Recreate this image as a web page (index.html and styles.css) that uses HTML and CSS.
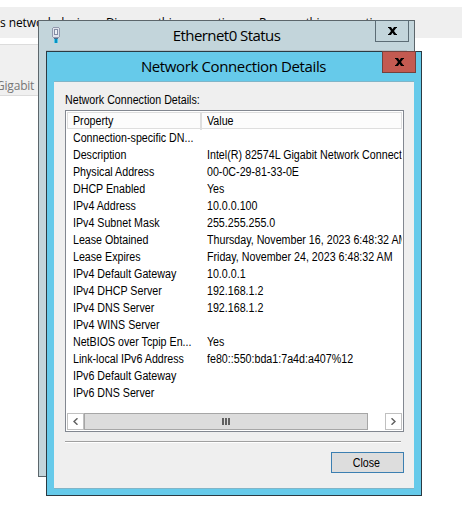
FILE: index.html
```
<!DOCTYPE html>
<html lang="en">
<head>
<meta charset="utf-8">
<title>Network Connection Details</title>
<link rel="stylesheet" href="styles.css">
</head>
<body>
<div class="toolbar"><span class="t1">s network device</span><span class="t2">Diagnose this connection</span><span class="t3">Rename this connection</span></div>
<div class="adapter">Gigabit</div>

<section class="window status">
  <header class="titlebar">
    <svg class="nic" width="10" height="17" viewBox="0 0 10 17" shape-rendering="crispEdges">
      <path d="M2 0h6v1h1v9H8v1H2v-1H1V1h1z" fill="#9299ae"/>
      <path d="M2 1h6v9H2z" fill="#dfe3ec"/>
      <path d="M3 2h4v6H3z" fill="#848ca4"/>
      <path d="M4 3h2v4H4z" fill="#eef1f6"/>
      <path d="M3 11h4v1H3z" fill="#4c6c90"/>
      <path d="M3 12h1v4H3zM6 12h1v4H6z" fill="#55c6e6"/>
      <path d="M4 12h2v4H4z" fill="#0891c0"/>
    </svg>
    <h1>Ethernet0 Status</h1>
    <button class="x" aria-label="Close"><svg width="9" height="8" viewBox="0 0 9 8"><path d="M0 0H3L4.500 2.300 6 0H9V1H8.200L6 4 8.200 7H9V8H6L4.500 5.700 3 8H0V7H.8L3 4 .8 1H0z"/></svg></button>
  </header>
</section>

<section class="window details">
  <header class="titlebar">
    <h1>Network Connection Details</h1>
    <button class="x red" aria-label="Close"><svg width="9" height="8" viewBox="0 0 9 8"><path d="M0 0H3L4.500 2.300 6 0H9V1H8.200L6 4 8.200 7H9V8H6L4.500 5.700 3 8H0V7H.8L3 4 .8 1H0z"/></svg></button>
  </header>
  <main class="client">
    <div class="caption"><span class="narrow">Network Connection Details:</span></div>
    <div class="list">
      <div class="head"><div><span class="narrow">Property</span></div><div><span class="narrow">Value</span></div></div>
      <div class="row"><span>Connection-specific DN...</span><span></span></div>
      <div class="row"><span>Description</span><span>Intel(R) 82574L Gigabit Network Connection</span></div>
      <div class="row"><span>Physical Address</span><span>00-0C-29-81-33-0E</span></div>
      <div class="row"><span>DHCP Enabled</span><span>Yes</span></div>
      <div class="row"><span>IPv4 Address</span><span>10.0.0.100</span></div>
      <div class="row"><span>IPv4 Subnet Mask</span><span>255.255.255.0</span></div>
      <div class="row"><span>Lease Obtained</span><span>Thursday, November 16, 2023 6:48:32 AM</span></div>
      <div class="row"><span>Lease Expires</span><span>Friday, November 24, 2023 6:48:32 AM</span></div>
      <div class="row"><span>IPv4 Default Gateway</span><span>10.0.0.1</span></div>
      <div class="row"><span>IPv4 DHCP Server</span><span>192.168.1.2</span></div>
      <div class="row"><span>IPv4 DNS Server</span><span>192.168.1.2</span></div>
      <div class="row"><span>IPv4 WINS Server</span><span></span></div>
      <div class="row"><span>NetBIOS over Tcpip En...</span><span>Yes</span></div>
      <div class="row"><span>Link-local IPv6 Address</span><span>fe80::550:bda1:7a4d:a407%12</span></div>
      <div class="row"><span>IPv6 Default Gateway</span><span></span></div>
      <div class="row"><span>IPv6 DNS Server</span><span></span></div>
      <div class="scroll">
        <div class="arrow"><svg width="5" height="7" viewBox="0 0 5 7"><path d="M4.5 .3L1 3.5 4.5 6.7"/></svg></div>
        <div class="thumb"><i></i><i></i><i></i></div>
        <div class="arrow right"><svg width="5" height="7" viewBox="0 0 5 7"><path d="M.5 .3L4 3.5 .5 6.7"/></svg></div>
      </div>
    </div>
    <div class="rule"></div>
    <button class="close"><span class="narrow">Close</span></button>
  </main>
</section>
</body>
</html>
```
FILE: styles.css
```
* { box-sizing: border-box; }
body {
  margin: 0;
  padding-top: 7px;
  width: 462px;
  height: 521px;
  overflow: hidden;
  background: #fff;
  color: #000;
  font: 12px/17px "Liberation Sans", Arial, sans-serif;
}
.narrow { display: inline-block; transform: scaleX(0.89); transform-origin: left; }
.toolbar {
  display: flex;
  height: 31px;
  background: #efefef;
  font: 12px/31px "Open Sans", sans-serif;
  letter-spacing: -0.35px;
  white-space: nowrap;
}
.t1 { width: 106px; letter-spacing: -0.1px; }
.t2 { width: 153px; }
.adapter {
  width: 60px;
  height: 52px;
  margin-top: 6px;
  padding-top: 32px;
  border: solid #dcdcdc;
  border-width: 1px 0;
  background: #f0f0f0;
  color: #777;
  font: 12px/18px "Open Sans", sans-serif;
  letter-spacing: -0.2px;
  text-indent: -4px;
}
.window { position: absolute; border: 1px solid #2b3a42; }
.status {
  left: 38px; top: 20px; width: 377px; height: 457px;
  background: #c3d5db;
  border-color: #5c666b;
}
.status .titlebar { height: 30px; margin: 0 7px; border-bottom: 1px solid #b1bfc5; }
.details {
  left: 46px; top: 51px; width: 376px; height: 445px;
  background: #66caea;
}
.titlebar { position: relative; height: 29px; }
.titlebar h1 {
  margin: 0;
  font: 15px/28px "Open Sans", sans-serif;
  text-align: center;
  letter-spacing: -0.38px;
}
.status h1 { letter-spacing: -0.55px; }
.details h1 { padding-right: 1px; }
.nic { position: absolute; left: 5px; top: 6px; }
.x {
  position: absolute;
  right: 5px; top: -1px;
  display: flex;
  align-items: center;
  justify-content: center;
  width: 34px; height: 22px;
  padding: 0 0 1px;
  border: 1px solid #5c6c75;
  background: #c3d5db;
}
.status .x { right: -2px; }
.x.red { background: #c35a51; border-color: #74413d; }
.client {
  width: 360px;
  height: 408px;
  margin-left: 7px;
  padding: 10px 10px 0 11px;
  border: solid #80b5c8;
  border-width: 1px 0;
  background: #efefef;
}
.caption { height: 18px; line-height: 17px; }
.list {
  display: flex;
  flex-direction: column;
  width: 339px;
  height: 322px;
  padding: 1px;
  border: 1px solid #828790;
  background: #fff;
  overflow: hidden;
}
.row {
  display: grid;
  grid-template-columns: 150.6px 1fr;
  width: 376.4px;
  height: 17px;
  padding-left: 6.7px;
  white-space: nowrap;
  transform: scaleX(0.89);
  transform-origin: left;
}
.row span { overflow: hidden; }
.head {
  display: grid;
  grid-template-columns: 134px 1fr;
  height: 17px;
  margin-bottom: 1px;
  border: 1px solid #dedede;
  background: #fcfcfc;
}
.head div:first-child { padding-left: 5px; border-right: 2px solid #dedede; }
.head div:last-child { padding-left: 5px; }
.scroll { display: flex; width: 335px; height: 17px; margin-top: auto; }
.arrow, .thumb { display: flex; align-items: center; justify-content: center; }
.arrow { width: 17px; border: 1px solid #c0c0c0; }
.arrow path { fill: none; stroke: #606060; stroke-width: 1.5; }
.arrow.right { margin-left: auto; }
.thumb { width: 284px; gap: 1px; border: 1px solid #a6a6a6; background: #dcdcdc; }
.thumb i { width: 2px; height: 7px; background: #606060; }
.rule { width: 336px; height: 2px; margin-top: 9px; border-top: 1px solid #a0a0a0; background: #fff; }
.close {
  display: block;
  width: 73px; height: 21px;
  margin: 9px 0 0 auto;
  padding: 0 2px 0 0;
  border: 1px solid #3c7fb1;
  background: #dddddd;
  font: 12px/18px "Liberation Sans", Arial, sans-serif;
}
.close .narrow { transform-origin: center; }
```
